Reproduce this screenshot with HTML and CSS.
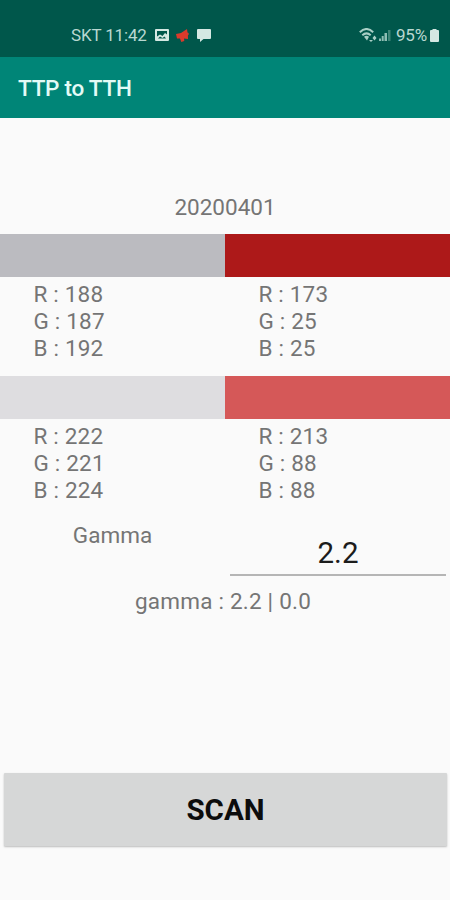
FILE: index.html
```
<!DOCTYPE html>
<html lang="en">
<head>
    <meta charset="UTF-8">
    <meta name="viewport" content="width=device-width, initial-scale=1.0">
    <title>TTP to TTH</title>
    <link rel="stylesheet" href="styles.css">
</head>
<body>
    <div class="status-bar">
        <div class="status-left">
            <span class="status-text">SKT 11:42</span>
            <svg class="icon-image" width="14" height="12" viewBox="0 0 14 12">
                <path fill="#d5e8e3" fill-rule="evenodd" d="M1 0h12a1 1 0 0 1 1 1v10a1 1 0 0 1-1 1H1a1 1 0 0 1-1-1V1a1 1 0 0 1 1-1zM2 2v5.500l3-2 2.500 1.500L10 4l2 1.500V2zM3 9.500h8L9.500 7.500l-2 1.500L5 7.500z"/>
            </svg>
            <svg class="icon-horn" width="13" height="13" viewBox="0 0 13 13">
                <path fill="#d93a2b" d="M0 5L5 4l6-4 .5 3.500c1.500.2 1.700 2.300.4 3L12 10 8 9.500l.3 2.500-3 1L4 9.500H1z"/>
            </svg>
            <svg class="icon-chat" width="14" height="13" viewBox="0 0 14 13">
                <path fill="#d5e8e3" d="M1 0h12a1 1 0 0 1 1 1v8a1 1 0 0 1-1 1H6.500L3 13v-3H1a1 1 0 0 1-1-1V1a1 1 0 0 1 1-1z"/>
            </svg>
        </div>
        <div class="status-right">
            <svg class="icon-wifi" width="18" height="14" viewBox="0 0 18 14">
                <g fill="none" stroke="#a9cfc6" stroke-width="2">
                    <path d="M.8 4.200C5 .2 10 .2 14.200 4.200"/>
                    <path d="M3.300 7.200C6 4.800 9 4.800 11.700 7.200"/>
                </g>
                <path fill="#a9cfc6" d="M5 8.800q2.500-2 5 0L8 12.500zM10 12h4l-2 2zM13.500 10L15.500 7.500 17.500 10l-2 2.500z"/>
            </svg>
            <svg class="icon-signal" width="12" height="12" viewBox="0 0 12 12">
                <path fill="#8fbdb3" d="M0 9.500h2V12H0zM2.700 7h2v5h-2zM5.500 4H8v8H5.500z"/>
                <path fill="#3f8577" d="M9 1h2.500v11H9z"/>
            </svg>
            <span class="status-text">95%</span>
            <svg class="icon-battery" width="9" height="13" viewBox="0 0 9 13">
                <path fill="#d5e8e3" d="M2.500 0h4v1H8a1 1 0 0 1 1 1v10a1 1 0 0 1-1 1H1a1 1 0 0 1-1-1V2a1 1 0 0 1 1-1h1.500z"/>
            </svg>
        </div>
    </div>

    <div class="app-bar">
        <h1>TTP to TTH</h1>
    </div>

    <main>
        <div class="date">20200401</div>

        <div class="color-row">
            <div class="color-cell">
                <div class="swatch gray-dark"></div>
                <div class="rgb">R : 188<br>G : 187<br>B : 192</div>
            </div>
            <div class="color-cell">
                <div class="swatch red-dark"></div>
                <div class="rgb">R : 173<br>G : 25<br>B : 25</div>
            </div>
        </div>

        <div class="color-row">
            <div class="color-cell">
                <div class="swatch gray-light"></div>
                <div class="rgb">R : 222<br>G : 221<br>B : 224</div>
            </div>
            <div class="color-cell">
                <div class="swatch red-light"></div>
                <div class="rgb">R : 213<br>G : 88<br>B : 88</div>
            </div>
        </div>

        <div class="gamma-row">
            <label class="gamma-label" for="gamma">Gamma</label>
            <div class="gamma-field">
                <input id="gamma" type="text" value="2.2">
            </div>
        </div>

        <div class="gamma-result">gamma : 2.2 | 0.0</div>

        <button class="scan-button">SCAN</button>
    </main>
</body>
</html>
```

FILE: styles.css
```
* {
    margin: 0;
    padding: 0;
    box-sizing: border-box;
}

body {
    font-family: Roboto, sans-serif;
    font-size: 22.5px;
    line-height: 26.7px;
    background: #fafafa;
    color: #757575;
    height: 900px;
    overflow: hidden;
}

.status-bar {
    display: flex;
    justify-content: space-between;
    height: 57px;
    padding: 13px 11px 0 71px;
    background: #00574b;
}

.status-left,
.status-right {
    display: flex;
    align-items: center;
    height: 44px;
}

.status-text {
    font-size: 17px;
    line-height: 20px;
    letter-spacing: -0.15px;
    color: #b9d8d1;
}

.icon-image {
    margin-left: 8px;
}

.icon-horn {
    margin-left: 7px;
}

.icon-chat {
    margin-left: 8px;
}

.icon-signal {
    margin: 0 5px 0 2px;
}

.icon-battery {
    margin-left: 3px;
}

.app-bar {
    display: flex;
    align-items: center;
    height: 61px;
    padding: 2px 0 0 18px;
    background: #008577;
}

.app-bar h1 {
    font-size: 22.5px;
    font-weight: 500;
    letter-spacing: -0.25px;
    color: #e4fbf6;
}

.date {
    margin-top: 76px;
    height: 40px;
    text-align: center;
}

.color-row {
    display: grid;
    grid-template-columns: 1fr 1fr;
    height: 142px;
}

.swatch {
    height: 43px;
}

.gray-dark {
    background: #bbbbc0;
}

.red-dark {
    background: #ad1919;
}

.gray-light {
    background: #dedde0;
}

.red-light {
    background: #d55858;
}

.rgb {
    padding: 4.4px 0 0 33.5px;
    letter-spacing: 0.2px;
}

.gamma-row {
    display: grid;
    grid-template-columns: 1fr 1fr;
    height: 70px;
}

.gamma-label {
    padding-top: 4px;
    text-align: center;
}

.gamma-field {
    padding: 14px 4px 0 5px;
}

.gamma-field input {
    display: block;
    width: 100%;
    height: 44px;
    border: none;
    border-bottom: 2px solid #b5b5b5;
    background: none;
    font-family: inherit;
    font-size: 29.5px;
    text-align: center;
    color: #1c1c1c;
}

.gamma-result {
    height: 185px;
    padding-right: 4px;
    letter-spacing: 0.22px;
    text-align: center;
}

.scan-button {
    display: block;
    width: 443px;
    height: 73px;
    margin-left: 4px;
    border: none;
    border-radius: 1px;
    background: #d6d7d7;
    box-shadow: 0 1px 2px rgba(0, 0, 0, 0.25);
    font-family: inherit;
    font-size: 29.5px;
    font-weight: 700;
    color: #0c0c0c;
}
```
